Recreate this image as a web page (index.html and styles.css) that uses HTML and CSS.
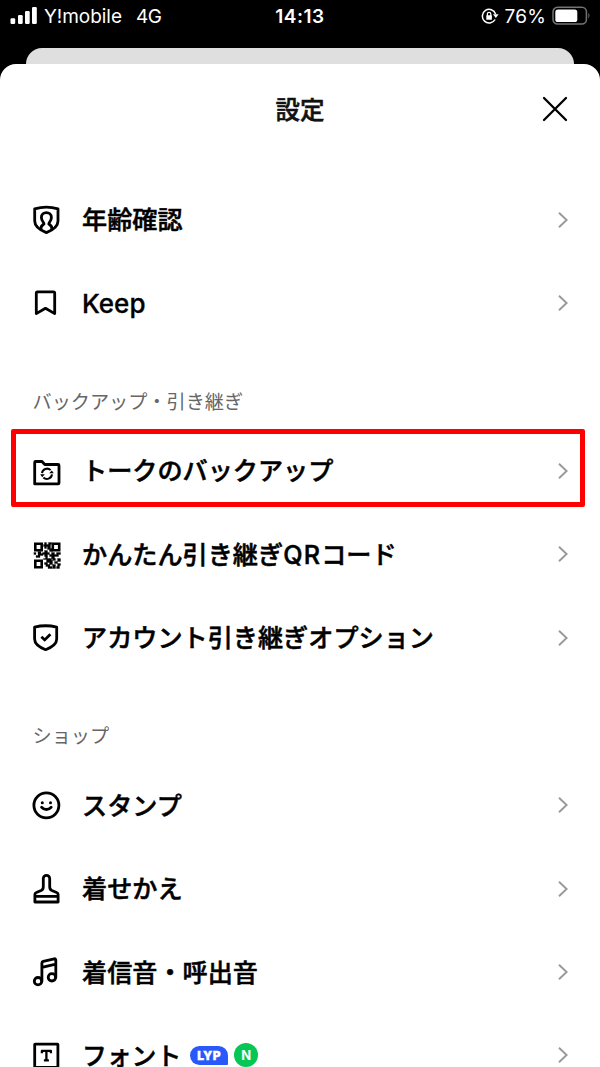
FILE: index.html
```html
<!DOCTYPE html>
<html lang="ja">
<head>
<meta charset="utf-8">
<title>設定</title>
<link rel="stylesheet" href="styles.css">
</head>
<body>
<svg class="defs" width="0" height="0"><symbol id="chevron" viewBox="0 0 12 18"><path d="M2 1.8 9.6 9 2 16.2" fill="none" stroke="#999" stroke-width="1.9"/></symbol></svg>
<div class="screen">
  <div class="status">
    <div class="status-left">
      <svg width="28" height="18" viewBox="0 0 28 18" fill="#fff"><rect x="0.5" y="11.3" width="4.7" height="5.7" rx="1.2"/><rect x="8" y="8" width="4.7" height="9" rx="1.2"/><rect x="15" y="4" width="4.7" height="13" rx="1.2"/><rect x="22" y="0" width="4.8" height="17" rx="1.2"/></svg>
      <span class="carrier">Y!mobile</span><span class="network">4G</span>
    </div>
    <div class="clock">14:13</div>
    <div class="status-right">
      <svg width="18" height="17" viewBox="0 0 18 17" fill="none" stroke="#fff" stroke-width="1.5"><path d="M14.1 11.5A6.8 6.8 0 1 1 14.6 6"/><path d="M12 6.3h5.6l-2.8 3.6z" fill="#fff" stroke="none"/><rect x="5.3" y="7.3" width="5.6" height="4.5" rx=".6" fill="#fff" stroke="none"/><path d="M6.4 8V6a1.7 1.7 0 0 1 3.4 0v2" stroke-width="1.2"/></svg>
      <span class="percent">76%</span>
      <svg width="39" height="20" viewBox="0 0 39 20"><rect x="1" y="1.3" width="33.4" height="16.8" rx="4.5" fill="none" stroke="#737373" stroke-width="1.5"/><rect x="3.3" y="3.5" width="22" height="12.5" rx="2.6" fill="#fff"/><path d="M36.4 6.8q2.2 2.8 0 5.8z" fill="#737373"/></svg>
    </div>
  </div>
  <div class="back-sheet"></div>
  <main class="sheet">
    <header class="header"><h1>設定</h1>
      <svg class="close" width="28" height="28" viewBox="0 0 28 28"><path d="M3 3 25 25M25 3 3 25" stroke="#000" stroke-width="2.3" stroke-linecap="round"/></svg>
    </header>
    <div class="row"><svg class="icon" viewBox="0 0 32 32"><path d="M4.7 4.8Q16.4 1.4 28 4.8V17Q28 24 16.4 28.6Q4.7 24 4.7 17Z"/><path d="M11 25.5C10.4 21.5 12.6 21.3 14 20C14.4 18.9 11.4 17.2 11.4 13.4C11.4 6.9 21.4 6.9 21.4 13.4C21.4 17.2 18.4 18.9 18.8 20C20.2 21.3 22.4 21.5 21.8 25.5" stroke-width="2.8"/></svg><span class="label">年齢確認</span><svg class="chevron"><use href="#chevron"/></svg></div>
    <div class="row"><svg class="icon" viewBox="0 0 32 32"><path d="M6.3 26.6V6Q6.3 4.9 7.4 4.9H23.5Q24.7 4.9 24.7 6V26.6L15.5 21.3Z"/></svg><span class="label latin">Keep</span><svg class="chevron"><use href="#chevron"/></svg></div>
    <h2 class="section">バックアップ・引き継ぎ</h2>
    <div class="row highlighted"><svg class="icon" viewBox="0 0 32 32"><path d="M4.7 28.9V7.4Q4.7 6.5 5.6 6.5H12L14.8 9.5H28.1Q29 9.5 29 10.4V28Q29 28.9 28.1 28.9Z"/><g stroke-width="2" stroke-linecap="butt"><path d="M12 18.2A5.1 5.1 0 0 1 20.6 15.1M22 19.4A5.1 5.1 0 0 1 13.4 22.5"/></g><path d="M19.2 18.3 23.8 18.3 21.8 15.4ZM14.8 19.3 10.2 19.3 12.2 22.2Z" fill="#000" stroke="none"/></svg><span class="label">トークのバックアップ</span><svg class="chevron"><use href="#chevron"/></svg></div>
    <div class="row"><svg class="icon" viewBox="0 0 32 32"><g stroke-width="2.6" stroke-linejoin="miter"><path d="M5.3 5.8h6.4v6.4H5.3zM22.8 5.8h6.4v6.4h-6.4zM5.3 22.8h6.4v6.4H5.3z"/></g><path fill="#000" stroke="#000" stroke-width=".3" d="M14.5 4.5h2v2h2v2h-2v2h-2v-2h-1v-2h1zM18.5 4.5h3v2h-1v4h2v3h-3v-2h-2v-3h1zM4 14.5h2v2H4zM8 13.5h3v2h2v2h-3v2H6v-2h2zM14.5 12.5h3v2h2v2h-2v2h-3v-2h-2v-2h2zM21.5 14.5h3v2h2v-2h4v2h-2v2h-4v2h-3v-2h-2v-2h2zM13.5 20.5h2v-2h2v2h2v2h2v-2h-2v2h3v4h-3v-2h-2v2h-3v-2h2v-3h-3zM22.5 20.5h3v2h-3zM27.5 20.5h3v3h-3zM24.5 23.5h3v2h-3zM22.5 26.5h3v4h-3zM27.5 25.5h3v2h-1v3h-3v-2h1zM16 26.5h4v2h2v2h-4v-2h-2z"/></svg><span class="label">かんたん引き継ぎ<span class="wide">QR</span>コード</span><svg class="chevron"><use href="#chevron"/></svg></div>
    <div class="row"><svg class="icon" viewBox="0 0 32 32"><path d="M4.6 5.2Q15.6 2.3 26.7 5.2V17Q26.7 23.4 15.6 27.7Q4.6 23.4 4.6 17Z"/><path d="M11.4 14.7 14.7 17.9 20.4 12.2" stroke-linecap="butt" stroke-linejoin="miter"/></svg><span class="label">アカウント引き継ぎオプション</span><svg class="chevron"><use href="#chevron"/></svg></div>
    <h2 class="section">ショップ</h2>
    <div class="row"><svg class="icon" viewBox="0 0 32 32"><circle cx="16.4" cy="16.3" r="12.5"/><path d="M11.6 18.2Q16.4 23 21.2 18.2"/><circle cx="12.3" cy="13.8" r="1.5" fill="#000" stroke="none"/><circle cx="20.5" cy="13.8" r="1.5" fill="#000" stroke="none"/></svg><span class="label">スタンプ</span><svg class="chevron"><use href="#chevron"/></svg></div>
    <div class="row"><svg class="icon" viewBox="0 0 32 32"><path d="M4.9 29V21.5Q4.9 20 6.4 19.5L11.1 17.5Q13.3 16.5 13.3 14V5.5A3.2 3.2 0 0 1 19.7 5.5V14Q19.7 16.5 21.9 17.5L26.6 19.5Q28.1 20 28.1 21.5V29ZM4.9 23.4H28.1"/></svg><span class="label">着せかえ</span><svg class="chevron"><use href="#chevron"/></svg></div>
    <div class="row"><svg class="icon" viewBox="0 0 32 32"><path d="M11.9 25.3V7.1Q11.9 5.8 13.2 5.4L24.3 2.8Q25.8 2.6 25.8 4V21.5M12 11.4 25.8 8.1"/><circle cx="8" cy="25.2" r="3.7"/><circle cx="21.9" cy="21.3" r="3.7"/></svg><span class="label">着信音・呼出音</span><svg class="chevron"><use href="#chevron"/></svg></div>
    <div class="row last"><svg class="icon" viewBox="0 0 32 32"><rect x="4.7" y="5.2" width="23.2" height="23.2" rx=".4"/><path d="M11.9 14.3V11.9H20.9V14.3M16.4 11.9V21.3M13.9 21.3H18.9" stroke-width="2.3" stroke-linecap="butt"/></svg><span class="label">フォント</span><span class="lyp">LYP</span><span class="new">N</span><svg class="chevron"><use href="#chevron"/></svg></div>
  </main>
</div>
</body>
</html>
```
FILE: styles.css
```css
* { box-sizing: border-box; }
body { margin: 0; background: #000; font-family: Inter, "Noto Sans CJK JP", sans-serif; color: #000; }
.defs { position: absolute; }
.screen { height: 1067px; overflow: hidden; display: flex; flex-direction: column; }
.status { flex: none; height: 48px; padding: 0 10px; display: grid; grid-template-columns: 1fr auto 1fr; align-items: start; color: #fff; font-size: 19px; line-height: 33px; }
.status-left, .status-right { display: flex; align-items: center; height: 33px; white-space: nowrap; }
.status-left svg { margin-top: -1px; }
.carrier { margin-left: 6px; letter-spacing: -.05px; }
.network { margin-left: 14px; letter-spacing: -.5px; }
.clock { font-weight: 600; letter-spacing: .5px; }
.status-right { justify-content: flex-end; margin-right: -1px; }
.status-right svg { margin-top: -1px; }
.percent { margin: 0 6px 0 6px; letter-spacing: .2px; }
.back-sheet { flex: none; height: 16px; margin: 0 26px; background: #dfdfdf; border-radius: 16px 16px 0 0; }
.sheet { flex: none; background: #fff; border-radius: 16px 16px 0 0; }
.header { height: 114px; padding: 0 31px 24px; display: grid; grid-template-columns: 28px 1fr 28px; align-items: center; }
.header h1 { grid-column: 2; margin: 0; padding-top: 1px; text-align: center; font-size: 24.5px; font-weight: 500; line-height: 36px; -webkit-text-stroke: .5px #111; color: #111; }
.row { height: 83.5px; padding: 0 31px 0 30px; display: flex; align-items: center; }
.icon { flex: none; width: 32px; height: 32px; fill: none; stroke: #000; stroke-width: 2.8; stroke-linejoin: round; stroke-linecap: round; }
.label { margin-left: 20px; padding-top: 1px; font-size: 25.15px; line-height: 36px; font-weight: 500; white-space: nowrap; -webkit-text-stroke: .5px #000; }
.latin { font-size: 26px; -webkit-text-stroke-width: .3px; }
.wide { letter-spacing: 1.2px; }
.chevron { flex: none; width: 12px; height: 18px; margin-left: auto; }
.section { margin: 0; height: 84px; padding: 42.5px 32.5px 0; font-size: 19.15px; font-weight: 400; line-height: 28px; color: #666; }
.highlighted { height: 78px; margin: 0 15px 5.5px 11px; padding: 5.5px 16px 0 19px; outline: 5px solid #f00; outline-offset: -5px; border-radius: 2px; }
.last { height: 82px; }
.last .label { line-height: 26px; padding-top: 1px; font-size: 24.8px; }
.lyp { margin-left: 9px; width: 38px; height: 19px; border-radius: 10px 10px 1px 10px; background: #2859fa; color: #fff; font: 900 12px/19px Inter, sans-serif; letter-spacing: .5px; text-align: center; -webkit-text-stroke: .3px #fff; }
.new { margin-left: 6px; width: 24px; height: 24px; border-radius: 50%; background: #06c755; color: #fff; font: 700 13px/24px Inter, sans-serif; text-align: center; }
```
